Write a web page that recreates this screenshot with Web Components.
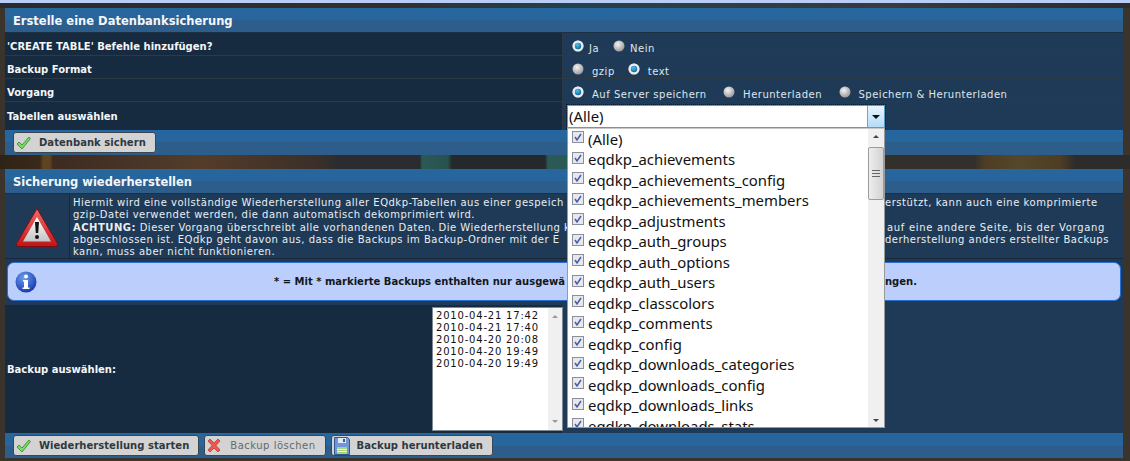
<!DOCTYPE html>
<html lang="de">
<head>
<meta charset="utf-8">
<title>Datenbanksicherung</title>
<style>
html, body { margin: 0; padding: 0; height: 461px; overflow: hidden; }
body {
    font-family: "DejaVu Sans", sans-serif;
    font-size: 10px;
    color: #fff;
    background:
        linear-gradient(90deg, #2e2318 0, #3a2a18 40px, #5e4420 43px, #5e4420 50px, #3e2b20 53px, #4a3728 150px, #553c28 200px, #3a2f28 320px, #2a2c30 340px, #2a2c30 420px, #2b5a56 422px, #28504e 448px, #25282c 452px, #25282c 545px, #2b5a56 548px, #2b5a56 570px, #33302c 885px, #33302c 975px, #4e3d24 985px, #54482a 1020px, #4e3d24 1060px, #2e2c2a 1075px, #2e2c2a 1130px) 0 155px / 1130px 14px no-repeat,
        linear-gradient(90deg, #2a2a2a 0, #33302c 400px, #24404a 570px, #2a3f48 620px, #3a3a3a 900px, #2e2c2a 1130px) 0 3px / 1130px 5px no-repeat,
        #3a342c;
}
</style>
</head>
<body>
<eq-page>
    <eq-panel title="Erstelle eine Datenbanksicherung">
        <eq-row label="'CREATE TABLE' Befehle hinzufügen?" style="--radio-gap: 14px">
            <eq-radio checked>Ja</eq-radio>
            <eq-radio>Nein</eq-radio>
        </eq-row>
        <eq-row label="Backup Format">
            <eq-radio wide>gzip</eq-radio>
            <eq-radio wide checked>text</eq-radio>
        </eq-row>
        <eq-row label="Vorgang" style="--radio-gap: 16.5px">
            <eq-radio wide checked>Auf Server speichern</eq-radio>
            <eq-radio wide>Herunterladen</eq-radio>
            <eq-radio wide>Speichern &amp; Herunterladen</eq-radio>
        </eq-row>
        <eq-row label="Tabellen auswählen" tall>
            <eq-multiselect value="(Alle)">
                <eq-check>(Alle)</eq-check>
                <eq-check>eqdkp_achievements</eq-check>
                <eq-check>eqdkp_achievements_config</eq-check>
                <eq-check>eqdkp_achievements_members</eq-check>
                <eq-check>eqdkp_adjustments</eq-check>
                <eq-check>eqdkp_auth_groups</eq-check>
                <eq-check>eqdkp_auth_options</eq-check>
                <eq-check>eqdkp_auth_users</eq-check>
                <eq-check>eqdkp_classcolors</eq-check>
                <eq-check>eqdkp_comments</eq-check>
                <eq-check>eqdkp_config</eq-check>
                <eq-check>eqdkp_downloads_categories</eq-check>
                <eq-check>eqdkp_downloads_config</eq-check>
                <eq-check>eqdkp_downloads_links</eq-check>
                <eq-check>eqdkp_downloads_stats</eq-check>
            </eq-multiselect>
        </eq-row>
        <eq-button slot="footer" icon="check">Datenbank sichern</eq-button>
    </eq-panel>

    <eq-panel title="Sicherung wiederherstellen">
        <eq-warning>
            <div>Hiermit wird eine vollständige Wiederherstellung aller EQdkp-Tabellen aus einer gespeich</div>
            <div>gzip-Datei verwendet werden, die dann automatisch dekomprimiert wird.</div>
            <div><b>ACHTUNG:</b> Dieser Vorgang überschreibt alle vorhandenen Daten. Die Wiederherstellung k</div>
            <div>abgeschlossen ist. EQdkp geht davon aus, dass die Backups im Backup-Ordner mit der E</div>
            <div>kann, muss aber nicht funktionieren.</div>
            <div slot="right" style="letter-spacing: .55px">erstützt, kann auch eine komprimierte</div>
            <div slot="right">&nbsp;</div>
            <div slot="right" style="padding-left: 2px; letter-spacing: .68px">auf eine andere Seite, bis der Vorgang</div>
            <div slot="right">derherstellung anders erstellter Backups</div>
        </eq-warning>
        <eq-info>
            * = Mit * markierte Backups enthalten nur ausgewä
            <span slot="right">ngen.</span>
        </eq-info>
        <eq-row label="Backup auswählen:" list>
            <eq-listbox>
                <div>2010-04-21 17:42</div>
                <div>2010-04-21 17:40</div>
                <div>2010-04-20 20:08</div>
                <div>2010-04-20 19:49</div>
                <div>2010-04-20 19:49</div>
            </eq-listbox>
        </eq-row>
        <eq-button slot="footer" icon="check">Wiederherstellung starten</eq-button>
        <eq-button slot="footer" icon="cross" muted>Backup löschen</eq-button>
        <eq-button slot="footer" icon="disk">Backup herunterladen</eq-button>
    </eq-panel>
</eq-page>

<script>
class EqPage extends HTMLElement {
    constructor() {
        super();
        this.attachShadow({ mode: 'open' });
        this.shadowRoot.innerHTML = `
            <style>
                :host {
                    display: flex;
                    flex-direction: column;
                    gap: 14px;
                    border-top: 3px solid #b9cdf6;
                    padding: 5px 7px 0 5px;
                }
            </style>
            <slot></slot>
        `;
    }
}

class EqPanel extends HTMLElement {
    constructor() {
        super();
        this.attachShadow({ mode: 'open' });
        this.shadowRoot.innerHTML = `
            <style>
                :host { display: block; }
                .bar {
                    background: linear-gradient(#1f69ad 0, #27659e 1px, #28659d 50%, #2c5d8b 50%, #2c5d8b 100%);
                    height: 25px;
                }
                .head {
                    font: bold 11.5px "DejaVu Sans", sans-serif;
                    line-height: 26px;
                    padding-left: 8px;
                    color: #f4f6f8;
                    border-bottom: 1px solid #1c3044;
                    height: 24px;
                }
                .foot {
                    display: flex;
                    gap: 5px;
                    align-items: center;
                    padding-left: 8px;
                }
            </style>
            <div class="bar head"></div>
            <slot></slot>
            <div class="bar foot"><slot name="footer"></slot></div>
        `;
        this.shadowRoot.querySelector('.head').textContent = this.getAttribute('title');
    }
}

class EqRow extends HTMLElement {
    constructor() {
        super();
        this.attachShadow({ mode: 'open' });
        this.shadowRoot.innerHTML = `
            <style>
                :host {
                    display: grid;
                    grid-template-columns: 557px 1fr;
                    height: 23px;
                    box-sizing: border-box;
                    border-bottom: 1px solid #2b3a45;
                    position: relative;
                }
                :host([tall]) { height: 28px; border-bottom: 0; }
                :host([list]) { height: 128px; border-bottom: 0; }
                .label {
                    display: flex;
                    align-items: center;
                    padding: 4px 0 0 2px;
                    background: #162a40;
                    font: bold 10px "DejaVu Sans", sans-serif;
                    color: #f4f6f8;
                }
                :host([tall]) .label, :host([list]) .label { padding-top: 0; }
                .value {
                    display: flex;
                    align-items: flex-start;
                    padding: 7px 0 0 9px;
                    background: #1f3a57;
                    border-left: 1px solid #2b3a45;
                }
                :host([list]) .value { padding: 0; }
                :host([tall]) .value { padding: 3px 0 0 4px; }
            </style>
            <div class="label"></div>
            <div class="value"><slot></slot></div>
        `;
        this.shadowRoot.querySelector('.label').textContent = this.getAttribute('label');
    }
}

class EqRadio extends HTMLElement {
    constructor() {
        super();
        this.attachShadow({ mode: 'open' });
        const on = this.hasAttribute('checked');
        this.shadowRoot.innerHTML = `
            <style>
                :host {
                    display: inline-flex;
                    align-items: flex-start;
                    gap: 5px;
                    margin-right: var(--radio-gap, 13px);
                    font: 10px/12px "DejaVu Sans", sans-serif;
                    letter-spacing: .5px;
                    color: #dfe6ec;
                }
                :host([wide]) { gap: 8px; }
                svg { flex: none; }
                span { position: relative; top: 3px; }
            </style>
            <svg width="12" height="12" viewBox="0 0 12 12">
                <defs>
                    <radialGradient id="r" cx=".4" cy=".35" r=".75">
                        <stop offset="0" stop-color="#f4f4f4"/>
                        <stop offset="1" stop-color="#8d8d8d"/>
                    </radialGradient>
                    <radialGradient id="d" cx=".4" cy=".3" r=".8">
                        <stop offset="0" stop-color="#4fc0ee"/>
                        <stop offset="1" stop-color="#0a5f92"/>
                    </radialGradient>
                </defs>
                <circle cx="6" cy="6" r="5.5" fill="url(#r)"/>
                ${on ? '<circle cx="6" cy="6" r="5.5" fill="#e8edf0"/><circle cx="6" cy="6" r="3.2" fill="url(#d)"/>' : ''}
            </svg>
            <span><slot></slot></span>
        `;
    }
}

const ICONS = {
    check: `<svg width="15" height="14" viewBox="0 0 15 14"><path d="M1 8l2-2 3 3 7-8 1.500 1.500L6 13z" fill="#86d36a" stroke="#3c9c3a" stroke-width="1"/></svg>`,
    cross: `<svg width="14" height="15" viewBox="0 0 14 15"><path d="M1 3l2-2 4 4 4-4 2 2-4 4.500 4 4.500-2 2-4-4-4 4-2-2 4-4.500z" fill="#ea5a52" stroke="#c23a34" stroke-width=".8"/></svg>`,
    disk: `<svg width="16" height="18" viewBox="0 0 16 18"><path d="M.5.5h13l2 2v15H.5z" fill="#6f96d8" stroke="#35578f" stroke-width="1"/><rect x="4" y="1" width="8" height="5" fill="#dfe8f6"/><rect x="9" y="2" width="2" height="3" fill="#35578f"/><rect x="3" y="10" width="10" height="7" fill="#a6d57c"/><path d="M3 12.500h10M3 14.500h10" stroke="#f2f7ea" stroke-width="1"/></svg>`
};

class EqButton extends HTMLElement {
    constructor() {
        super();
        this.attachShadow({ mode: 'open' });
        this.shadowRoot.innerHTML = `
            <style>
                :host {
                    display: inline-flex;
                    align-items: center;
                    height: 21px;
                    box-sizing: border-box;
                    padding: 0 9px 0 2px;
                    background: #d3d3d3;
                    border: 1px solid #3c4650;
                    border-radius: 3px;
                    font: bold 10px "DejaVu Sans", sans-serif;
                    letter-spacing: .04px;
                    color: #303840;
                }
                :host([muted]) { font-weight: normal; color: #626a70; letter-spacing: .5px; }
                .icon { display: flex; width: 23px; }
            </style>
            <span class="icon">${ICONS[this.getAttribute('icon')]}</span>
            <slot></slot>
        `;
    }
}

class EqMultiselect extends HTMLElement {
    constructor() {
        super();
        this.attachShadow({ mode: 'open' });
        this.shadowRoot.innerHTML = `
            <style>
                :host {
                    display: block;
                    position: relative;
                    width: 318px;
                    height: 23px;
                    z-index: 2;
                    font: 14.9px "Noto Sans", sans-serif;
                    color: #111;
                }
                .box {
                    display: flex;
                    height: 23px;
                    box-sizing: border-box;
                    background: #fff;
                    border: 1px solid #5c9dc8;
                    outline: 1px dotted #0b1a2a;
                    line-height: 21px;
                }
                .val { flex: 1; padding-left: 1px; }
                .arrow {
                    width: 16px;
                    display: flex;
                    align-items: center;
                    justify-content: center;
                    background: linear-gradient(#e9f5fd, #b4dcf6);
                    border-left: 1px solid #6aa6cc;
                }
                .arrow i {
                    width: 0; height: 0;
                    border: 4px solid transparent;
                    border-top: 4px solid #111;
                    border-bottom: 0;
                }
                .drop {
                    position: absolute;
                    left: 0;
                    top: 23px;
                    width: 318px;
                    height: 300px;
                    box-sizing: border-box;
                    background: #fff;
                    border: 1px solid #9a9a9a;
                    border-top-color: #c8c8c8;
                    overflow: hidden;
                    display: flex;
                }
                .items { flex: 1; padding-left: 4px; margin-top: -.5px; overflow: hidden; }
                .bar {
                    width: 16px;
                    background: #f0f0f0;
                    position: relative;
                    display: flex;
                    flex-direction: column;
                    align-items: center;
                }
                .bar b { flex: none; width: 0; height: 0; border: 3px solid transparent; margin-top: 6px; border-bottom: 3px solid #444; border-top: 0; }
                .bar u {
                    position: absolute; left: 0; right: 0; top: 18px; height: 53px;
                    background: linear-gradient(90deg, #eee, #d2d2d2);
                    border: 1px solid #9c9c9c; border-radius: 2px; box-sizing: border-box;
                }
                .bar u::after {
                    content: ""; position: absolute; left: 3px; right: 3px; top: 22px; height: 7px;
                    background: repeating-linear-gradient(#666 0 1px, transparent 1px 3px);
                }
                .bar em { position: absolute; bottom: 5px; width: 0; height: 0; border: 3px solid transparent; border-top: 3px solid #444; border-bottom: 0; }
            </style>
            <div class="box">
                <div class="val"></div>
                <div class="arrow"><i></i></div>
            </div>
            <div class="drop">
                <div class="items"><slot></slot></div>
                <div class="bar"><b></b><u></u><em></em></div>
            </div>
        `;
        this.shadowRoot.querySelector('.val').textContent = this.getAttribute('value');
    }
}

class EqCheck extends HTMLElement {
    constructor() {
        super();
        this.attachShadow({ mode: 'open' });
        this.shadowRoot.innerHTML = `
            <style>
                :host {
                    display: flex;
                    align-items: center;
                    gap: 4px;
                    height: 20.500px;
                    white-space: nowrap;
                }
                svg { flex: none; margin-top: -3px; }
            </style>
            <svg width="12" height="12" viewBox="0 0 12 12">
                <rect x=".5" y=".5" width="11" height="11" fill="#e6e8ee" stroke="#8b8f99"/>
                <path d="M3 6l2 3 4-6" fill="none" stroke="#4a5aa0" stroke-width="1.500"/>
            </svg>
            <slot></slot>
        `;
    }
}

class EqWarning extends HTMLElement {
    constructor() {
        super();
        this.attachShadow({ mode: 'open' });
        this.shadowRoot.innerHTML = `
            <style>
                :host {
                    display: grid;
                    grid-template-columns: 65px 497px 318px 1fr;
                    height: 65px;
                    background: #1f3a57;
                    border-bottom: 1px solid #16283a;
                    box-sizing: border-box;
                    font: 10px/12.25px "DejaVu Sans", sans-serif;
                    letter-spacing: .5px;
                    color: #e9eef2;
                }
                .icon {
                    display: flex;
                    align-items: center;
                    justify-content: center;
                    border-right: 1px solid #16283a;
                    padding-top: 4px;
                }
                .text { padding: 3px 0 0 3px; white-space: nowrap; overflow: hidden; }
                .right { grid-column: 4; padding-top: 3px; white-space: nowrap; }
            </style>
            <div class="icon">
                <svg width="44" height="42" viewBox="0 0 44 42">
                    <defs>
                        <linearGradient id="w" x1="0" y1="0" x2="0" y2="1">
                            <stop offset="0" stop-color="#fff"/>
                            <stop offset="1" stop-color="#c4c4c4"/>
                        </linearGradient>
                        <linearGradient id="e" x1="0" y1="0" x2="0" y2="1">
                            <stop offset="0" stop-color="#f06a6a"/>
                            <stop offset="1" stop-color="#c01418"/>
                        </linearGradient>
                    </defs>
                    <path d="M22 1.500 L42.500 36.500 Q43.500 39.500 40.500 39.500 H3.500 Q.5 39.500 1.500 36.500 Z" fill="url(#e)" stroke="#7d0c10" stroke-linejoin="round"/>
                    <path d="M22 10 L36 34.500 H8 Z" fill="url(#w)"/>
                    <path d="M20 15h4l-.8 11h-2.400z" fill="#111"/>
                    <circle cx="22" cy="30" r="2" fill="#111"/>
                </svg>
            </div>
            <div class="text"><slot></slot></div>
            <div class="right"><slot name="right"></slot></div>
        `;
    }
}

class EqInfo extends HTMLElement {
    constructor() {
        super();
        this.attachShadow({ mode: 'open' });
        this.shadowRoot.innerHTML = `
            <style>
                :host {
                    display: block;
                    background: #1f3a57;
                    padding: 3px 2px 4px 2px;
                }
                .box {
                    display: grid;
                    grid-template-columns: 28px 524px 318px 1fr;
                    align-items: center;
                    height: 39px;
                    box-sizing: border-box;
                    background: #bccffc;
                    border: 1px solid #2a6fd0;
                    border-radius: 7px;
                    font: bold 10px "DejaVu Sans", sans-serif;
                    color: #121820;
                    padding-left: 7px;
                }
                svg { display: block; }
                .text { padding-left: 231px; white-space: nowrap; overflow: hidden; }
                .right { grid-column: 4; }
            </style>
            <div class="box">
                <svg width="22" height="22" viewBox="0 0 22 22">
                    <defs>
                        <radialGradient id="i" cx=".4" cy=".3" r=".8">
                            <stop offset="0" stop-color="#6d9df0"/>
                            <stop offset="1" stop-color="#0a2fa8"/>
                        </radialGradient>
                    </defs>
                    <circle cx="11" cy="11" r="10.500" fill="url(#i)"/>
                    <circle cx="11" cy="5.500" r="2" fill="#fff"/>
                    <path d="M8 9h5v7.500h1.500V18h-7v-1.500H9V10.500H8z" fill="#fff"/>
                </svg>
                <div class="text"><slot></slot></div>
                <div class="right"><slot name="right"></slot></div>
            </div>
        `;
    }
}

class EqListbox extends HTMLElement {
    constructor() {
        super();
        this.attachShadow({ mode: 'open' });
        this.shadowRoot.innerHTML = `
            <style>
                :host {
                    display: flex;
                    width: 131px;
                    height: 124px;
                    margin: 2px 0 0 -131px;
                    box-sizing: border-box;
                    background: #fff;
                    border: 1px solid #7c8894;
                    font: 10px/12px "DejaVu Sans", sans-serif;
                    letter-spacing: .8px;
                    color: #111;
                    position: relative;
                }
                .items { flex: 1; padding: 2px 0 0 3px; white-space: nowrap; }
                .bar { width: 14px; background: #f0f0f0; position: relative; }
                .bar b, .bar em { position: absolute; left: 4px; width: 0; height: 0; border: 3px solid transparent; }
                .bar b { top: 7px; border-bottom: 3px solid #999; border-top: 0; }
                .bar em { bottom: 7px; border-top: 3px solid #999; border-bottom: 0; }
            </style>
            <div class="items"><slot></slot></div>
            <div class="bar"><b></b><em></em></div>
        `;
    }
}

customElements.define('eq-page', EqPage);
customElements.define('eq-panel', EqPanel);
customElements.define('eq-row', EqRow);
customElements.define('eq-radio', EqRadio);
customElements.define('eq-button', EqButton);
customElements.define('eq-multiselect', EqMultiselect);
customElements.define('eq-check', EqCheck);
customElements.define('eq-warning', EqWarning);
customElements.define('eq-info', EqInfo);
customElements.define('eq-listbox', EqListbox);
</script>
</body>
</html>
